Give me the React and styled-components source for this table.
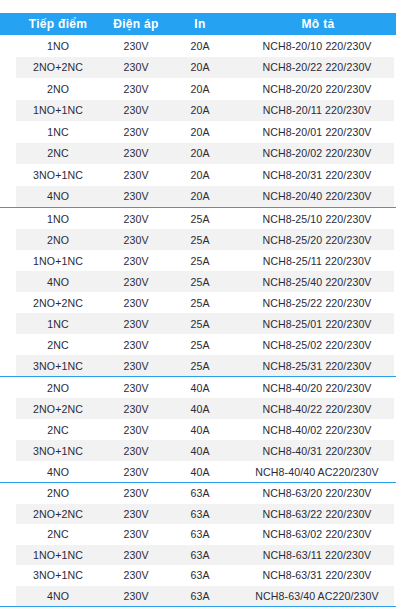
import React from "react";
import styled, { createGlobalStyle } from "styled-components";

const Global = createGlobalStyle`
  html, body { margin: 0; padding: 0; background: #fff; }
  body { font-family: "Liberation Sans", Arial, sans-serif; }
`;

const Page = styled.div`
  padding-top: 13px;
  width: 396px;
`;

const cols = "84px 72px 56px 1fr";

const HeaderRow = styled.div`
  display: grid;
  grid-template-columns: ${cols};
  height: 22px;
  align-items: center;
  background: #25a3f2;
  padding: 0 0 0 16px;
  color: #fff;
  font-weight: 700;
  font-size: 12px;
  letter-spacing: 0.3px;
`;

const Group = styled.div`
  border-bottom: 1px solid #2a9fee;
`;

const Row = styled.div`
  display: grid;
  grid-template-columns: ${cols};
  height: ${(p) => p.$h}px;
  align-items: center;
  margin: 0 2px 0 16px;
  background: ${(p) => (p.$alt ? "#f2f2f2" : "#fff")};
  color: #2b2b38;
  font-size: 10.6px;
  letter-spacing: 0.1px;
`;

const Cell = styled.div`
  text-align: center;
  white-space: nowrap;
  padding-left: ${(p) => (p.$shift ? "12px" : "0")};
`;

const groups = [
  {
    h: 21.5,
    rows: [
      ["1NO", "20A", "NCH8-20/10 220/230V"],
      ["2NO+2NC", "20A", "NCH8-20/22 220/230V"],
      ["2NO", "20A", "NCH8-20/20 220/230V"],
      ["1NO+1NC", "20A", "NCH8-20/11 220/230V"],
      ["1NC", "20A", "NCH8-20/01 220/230V"],
      ["2NC", "20A", "NCH8-20/02 220/230V"],
      ["3NO+1NC", "20A", "NCH8-20/31 220/230V"],
      ["4NO", "20A", "NCH8-20/40 220/230V"],
    ],
  },
  {
    h: 21,
    rows: [
      ["1NO", "25A", "NCH8-25/10 220/230V"],
      ["2NO", "25A", "NCH8-25/20 220/230V"],
      ["1NO+1NC", "25A", "NCH8-25/11 220/230V"],
      ["4NO", "25A", "NCH8-25/40 220/230V"],
      ["2NO+2NC", "25A", "NCH8-25/22 220/230V"],
      ["1NC", "25A", "NCH8-25/01 220/230V"],
      ["2NC", "25A", "NCH8-25/02 220/230V"],
      ["3NO+1NC", "25A", "NCH8-25/31 220/230V"],
    ],
  },
  {
    h: 21,
    rows: [
      ["2NO", "40A", "NCH8-40/20 220/230V"],
      ["2NO+2NC", "40A", "NCH8-40/22 220/230V"],
      ["2NC", "40A", "NCH8-40/02 220/230V"],
      ["3NO+1NC", "40A", "NCH8-40/31 220/230V"],
      ["4NO", "40A", "NCH8-40/40 AC220/230V"],
    ],
  },
  {
    h: 20.5,
    rows: [
      ["2NO", "63A", "NCH8-63/20 220/230V"],
      ["2NO+2NC", "63A", "NCH8-63/22 220/230V"],
      ["2NC", "63A", "NCH8-63/02 220/230V"],
      ["1NO+1NC", "63A", "NCH8-63/11 220/230V"],
      ["3NO+1NC", "63A", "NCH8-63/31 220/230V"],
      ["4NO", "63A", "NCH8-63/40 AC220/230V"],
    ],
  },
];

export default function App() {
  return (
    <>
      <Global />
      <Page>
        <HeaderRow>
          <Cell>Tiếp điểm</Cell>
          <Cell>Điện áp</Cell>
          <Cell>In</Cell>
          <Cell $shift>Mô tả</Cell>
        </HeaderRow>
        {groups.map((g, gi) => (
          <Group key={gi}>
            {g.rows.map((r, ri) => (
              <Row key={ri} $alt={ri % 2 === 1} $h={g.h}>
                <Cell>{r[0]}</Cell>
                <Cell>230V</Cell>
                <Cell>{r[1]}</Cell>
                <Cell $shift>{r[2]}</Cell>
              </Row>
            ))}
          </Group>
        ))}
      </Page>
    </>
  );
}
